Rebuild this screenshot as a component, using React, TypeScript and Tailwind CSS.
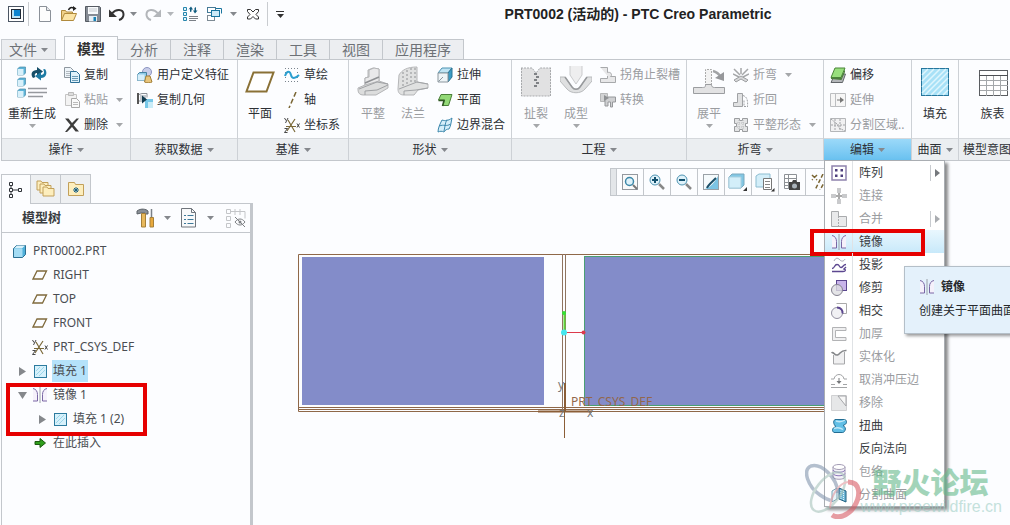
import { useState } from "react";
import type { ReactNode } from "react";
import clsx from "clsx";

type IconProps = { size?: number; children: ReactNode };

function Icon({ size = 16, children }: IconProps) {
  return (
    <svg
      width={size}
      height={size}
      viewBox={`0 0 ${size} ${size}`}
      fill="none"
      className="shrink-0"
      aria-hidden="true"
    >
      {children}
    </svg>
  );
}

function Caret({ className = "text-[#85888d]" }: { className?: string }) {
  return (
    <svg width="7" height="4" viewBox="0 0 7 4" className={clsx("shrink-0", className)} aria-hidden="true">
      <path d="M0 0h7L3.5 4z" fill="currentColor" />
    </svg>
  );
}

/* ---------- quick access icons ---------- */

const WindowIcon = (
  <Icon>
    <rect x=".5" y=".5" width="15" height="15" fill="#fff" stroke="#4b5563" />
    <rect x="3.5" y="3.5" width="9" height="9" fill="#b9e2f5" stroke="#1f2937" />
    <rect x="6" y="4" width="6" height="6" fill="#0b84d0" />
  </Icon>
);
const NewIcon = (
  <Icon>
    <path d="M2.5.5h7l4 4v11h-11z" fill="#fdfdfd" stroke="#8b9199" />
    <path d="M9.5.5v4h4" stroke="#8b9199" fill="#e5e7eb" />
  </Icon>
);
const OpenIcon = (
  <Icon>
    <path d="M.5 14.5v-10h4l1 1.5h6v2" fill="#f0d18a" stroke="#b08a3c" />
    <path d="M.5 14.5l3-7h12l-3 7z" fill="#fbe4a6" stroke="#b08a3c" />
    <path d="M7.500 4c1-2.500 3-3 5-2" stroke="#222" strokeWidth="1.500" />
    <path d="M12 0l3.500 2.500L12 5z" fill="#222" />
  </Icon>
);
const SaveIcon = (
  <Icon>
    <path d="M.5.5h14l1 1v14H.5z" fill="#858b94" stroke="#555b63" />
    <rect x="3" y="1" width="10" height="7" fill="#f8fafc" />
    <path d="M4 3h8M4 5h8" stroke="#c4c9cf" />
    <rect x="4" y="10" width="8" height="5.500" fill="#e6eef5" />
    <rect x="8.500" y="11" width="2.500" height="4" fill="#1681b5" />
  </Icon>
);
const UndoIcon = (
  <Icon>
    <path d="M3 7.500C7 2.500 14 3 14.500 8c.2 3-1.500 5-4.500 6" stroke="#333" strokeWidth="2" />
    <path d="M0 3.500V11h8z" fill="#333" />
  </Icon>
);
const RedoIcon = (
  <Icon>
    <path d="M13 7.500C9 2.500 2 3 1.500 8c-.2 3 1.500 5 4.500 6" stroke="#b3b6ba" strokeWidth="2" />
    <path d="M16 3.500V11H8z" fill="#b3b6ba" />
  </Icon>
);
const RegenSmallIcon = (
  <Icon>
    <path d="M1.500 1.500h3v3h-3zM1.500 6.500h3v3h-3zM1.500 11.500h3v3h-3z" fill="#e3f4fb" stroke="#2786ad" />
    <path d="M7 10.500h9M7 12.500h9M7 14.500h7" stroke="#7b8087" />
    <path d="M8 6V3l-1.500.5L9 .5l2 3H9.500v2zM14 1v3.500h1.500l-2.500 3-2-3h1.500V2z" fill="#115d80" />
  </Icon>
);
const WindowsIcon = (
  <Icon>
    <rect x="1.500" y="1.500" width="8" height="5" fill="#fff" stroke="#457a97" />
    <rect x="1.500" y="9.500" width="7" height="5" fill="#fff" stroke="#7d8a94" />
    <rect x="5.500" y="4.500" width="8" height="6" fill="#cdeaf7" stroke="#1a759f" />
    <path d="M10 2.500h5.500v5" stroke="#1a759f" />
  </Icon>
);
const CloseIcon = (
  <Icon>
    <path
      d="M2.500 3.500h3L8 6l2.500-2.500h3v2L11 8.500l2.500 2.500v2h-3L8 10.500 5.500 13h-3v-2L5 8.500 2.500 5.500z"
      fill="#fff"
      stroke="#333"
    />
  </Icon>
);

/* ---------- ribbon icons ---------- */

const RegenIcon = (
  <Icon size={32}>
    {[1, 12, 23].map((y) => (
      <g key={y}>
        <path d={`M1.500 ${y + 2}l2-2h6v6l-2 2h-6z`} fill="#5db4d8" stroke="#4a8aa8" strokeWidth=".7" />
        <path d={`M1.500 ${y + 2}h6v6h-6z`} fill="#d8f0fa" />
      </g>
    ))}
    <path d="M12 22.500h19M12 26.500h19M12 30.500h15" stroke="#96999e" strokeWidth="1.500" />
    <path d="M17 12c-3-4-1-8 4-8V1l6 4.500-6 4.500V7c-2 0-3 2-1.500 4z" fill="#164e68" />
    <path d="M29 3c3 4 1 9-4 9v2.500L19 10l6-4v3c3 0 4-3 2-5.500z" fill="#1d7ba4" />
  </Icon>
);
const CopyIcon = (
  <Icon>
    <path d="M.5.5h6l3 3v7h-9z" fill="#eef5fa" stroke="#8e979f" />
    <path d="M2 4.500h5M2 6.500h5M2 8.500h5" stroke="#b3bac0" />
    <path d="M6.500 4.500h6l3 3v8h-9z" fill="#dff1fa" stroke="#2c6f96" />
    <path d="M8 9.500h6M8 11.500h6M8 13.500h6" stroke="#6a9bb6" />
  </Icon>
);
const PasteIcon = (
  <Icon>
    <path d="M1.500 2.500h11v11h-11z" fill="#f3f3f3" stroke="#c4c4c4" />
    <path d="M4.500.5h5v3h-5z" fill="#ddd" stroke="#bbb" />
    <path d="M7.500 6.500h5l3 3v6h-8z" fill="#fafafa" stroke="#a8a8a8" />
    <path d="M9 10.500h5M9 12.500h5" stroke="#bbb" />
  </Icon>
);
const DeleteIcon = (
  <Icon>
    <path d="M1 1.500h3.500L8 6l4.500-4.500H15L9.500 8l5.500 6.500h-3.500L8 10l-5 5H1l5.500-7z" fill="#3d3d3d" />
  </Icon>
);
const UdfIcon = (
  <Icon>
    <circle cx="10" cy="5" r="4.500" fill="#c8cde9" stroke="#8c94c0" />
    <path d="M.5 7.500l2-2h7v6l-2 2h-7z" fill="#8fcbe8" stroke="#4583a2" />
    <path d="M.5 7.500h7v6h-7z" fill="#d6eefa" />
    <path d="M7.500 15l1.500-6h4l2 6c-1.500 1-6 1-7.500 0z" fill="#e8c57c" stroke="#a37f36" />
  </Icon>
);
const CopyGeomIcon = (
  <Icon>
    <path d="M1 1v11" stroke="#555" strokeWidth="2" />
    <path d="M2 2.500l3-1h5v4M2 9h3" stroke="#8b9097" />
    <path d="M3 3h6v6H3z" fill="#c3c8ce" />
    <path d="M8 7h8v9H8z" fill="#79c8e8" />
    <path d="M5 3.500l5 4-5 4z" fill="#123c50" />
    <path d="M11 10h5v6h-5z" fill="#c9ecf8" />
  </Icon>
);
const PlaneIcon = (
  <Icon size={32}>
    <path d="M9.500 6.500h20l-7 19h-20z" fill="#fff" stroke="#8a7136" strokeWidth="2" />
  </Icon>
);
const SketchIcon = (
  <Icon>
    <path
      d="M1 1.500h1M4 1.500h1M7 1.500h1M10 1.500h1M13 1.500h1M1 5.500h1M13 5.500h1M1 10.500h1M13 10.500h1M1 14.500h1M4 14.500h1M7 14.500h1M10 14.500h1M13 14.500h1"
      stroke="#7a848d"
    />
    <path d="M1 9c2-6 5-5 6-1s4 4 8 0" stroke="#2b9fd0" strokeWidth="2" />
  </Icon>
);
const AxisIcon = (
  <Icon>
    <path d="M12 0L5 16" stroke="#7a6634" strokeWidth="1.500" strokeDasharray="5 2.500" />
  </Icon>
);
const CsysIcon = (
  <Icon>
    <path d="M2 9.500h10M3 14L11 2M4 3l7 12" stroke="#7b6a3a" strokeWidth="1.200" />
    <path d="M.5 1l1.500 2.500M4 1L1.500 6M.5 11.500h3l-3 4h3M13 6.500l2.500 4M15.500 6.500l-2.500 4" stroke="#333" strokeWidth=".9" />
  </Icon>
);
const FlatWallIcon = (
  <Icon size={32}>
    <path d="M1 22l7-3v-7l3-1V4l5-2 6 1v12l9 3v4l-12 7H6c-3 0-5-2-5-5z" fill="#dcdddd" stroke="#b4b5b7" />
    <path d="M8 12l4-1V4l5-2 5 1v12L8 19z" fill="#e9e9ea" stroke="#b4b5b7" />
    <path d="M2 23l18-7 11 2M8 29v-4l12-1 11-5" stroke="#9fa1a4" />
    <path d="M8 17l14-6" stroke="#8f9194" strokeWidth="1.500" />
  </Icon>
);
const FlangeIcon = (
  <Icon size={32}>
    <path d="M2 9c3-5 8-8 18-8v15l11 2v4l-10 2-4 5H7c-4 0-6-2-6-6z" fill="#e0e1e1" stroke="#b5b6b8" />
    <path d="M6 6v16M10 4v16M14 2v16M18 2v14" stroke="#8f9194" strokeDasharray="2 2" />
    <path d="M2 23l18-7 11 2M7 29v-4l12-1 12-2" stroke="#a2a4a7" />
  </Icon>
);
const ExtrudeIcon = (
  <Icon>
    <path d="M1 6l4-5h10l-4 5z" fill="#bfe4f4" stroke="#4d92b1" />
    <path d="M11 6l4-5v9l-4 5z" fill="#3b9cc5" stroke="#2d7595" />
    <path d="M1 6h10v9H1z" fill="#eef4f7" stroke="#8b969d" />
    <path d="M1.500 14.500L6 10" stroke="#8b969d" />
  </Icon>
);
const FlatGreenIcon = (
  <Icon>
    <path d="M4 2.500h11l-3.500 11H6L7.500 8H1.500z" fill="#93d977" stroke="#4a7f38" />
    <path d="M5.500 14l1.500-5.500H1.500" stroke="#2f5722" strokeWidth="1.500" />
  </Icon>
);
const BoundaryIcon = (
  <Icon>
    <path d="M5 3c3 1 6 1 10-2-1 4-1 8-3 11-2 0-4 1-5 3-2-1-4-1-6 0 0-4 2-8 4-12z" fill="#d5eefa" stroke="#3d88ad" />
    <path d="M2.500 9c4-2 7 1 11-2M10 2.500C8 6 8 10 7 14" stroke="#3d88ad" />
  </Icon>
);
const RipIcon = (
  <Icon size={32}>
    <path d="M1 2h11l4 5 4-5h11v28H1z" fill="#e1e1e2" />
    <path d="M1 2h11l4 5 4-5h11M1.500 2v28h29V2" stroke="#a8aaad" strokeDasharray="2 1" />
    <path d="M14 8h3M16 11h3M14 14h3M16 17h3M14 20h3" stroke="#808286" strokeWidth="2" />
  </Icon>
);
const FormIcon = (
  <Icon size={32}>
    <path d="M10 0v9l6 9 6-9V0" fill="#eeeeef" stroke="#cacbcd" />
    <path d="M0 11h5l7 10c2 3 6 3 8 0l7-10h5v4l-7 8c-4 5-14 5-18 0l-7-8z" fill="#dfe0e1" stroke="#b9bbbd" />
    <path d="M5 11l7 10c2 3 6 3 8 0l7-10" stroke="#97999c" strokeWidth="1.500" />
  </Icon>
);
const ReliefIcon = (
  <Icon>
    <path d="M.5.500h7v5c4-1 5 3 3 4h5v6H.5v-4h7V9" fill="#e7e7e8" stroke="#a7a9ab" />
  </Icon>
);
const ConvertIcon = (
  <Icon>
    <path d="M.5 1.500h7v8h-7z" fill="#d2d3d4" stroke="#b7b8b9" />
    <path d="M5 14v-7l3-2h7.500v5h-3v5h-2v-5H8v4z" fill="#cfd0d2" stroke="#96989b" />
    <path d="M4 3l5 3-5 3z" fill="#8e9093" />
  </Icon>
);
const UnbendIcon = (
  <Icon size={32}>
    <path d="M12.500 20V3.500h6V20" fill="#f2f2f2" stroke="#aaa" strokeDasharray="2 1" />
    <path d="M.5 21.500h9c3 0 3-1 3-3h6c0 2 1 3 3 3h10v6H.5z" fill="#e2e2e3" stroke="#9b9da0" />
    <path d="M20 5c4 1 6 3 8 6" stroke="#a2a4a6" strokeWidth="2.500" />
    <path d="M31 6v9l-9-3z" fill="#96989b" />
  </Icon>
);
const BendIcon = (
  <Icon>
    <path d="M1 2l6 6M15 2L9 8M0 7l6 3M16 7l-6 3M8 1v6" stroke="#a5a7a9" strokeWidth="1.500" />
    <path d="M1 13l7-4 7 4-2 2-5-3-5 3z" fill="#d7d8d9" stroke="#9d9fa2" />
  </Icon>
);
const BendBackIcon = (
  <Icon>
    <path d="M.5 10.500h4v-9h5v13h-9z" fill="#e0e1e2" stroke="#a0a2a5" />
    <path d="M10 3.500c4 1 5 5 4.500 11M11 8.500v6h4" stroke="#a0a2a5" strokeDasharray="2 1" />
  </Icon>
);
const FlatPatternIcon = (
  <Icon>
    <path d="M1.500 1.500h5v2h3v-2h5v5h-2v3h2v5h-5v-2h-3v2h-5v-5h2v-3h-2z" fill="#e3e4e5" stroke="#9a9c9f" />
    <path d="M4 6h8M4 10h8M6 3v10M10 3v10" stroke="#b9bbbd" strokeDasharray="1 1" />
  </Icon>
);
const OffsetIcon = (
  <Icon>
    <path d="M5 7h10.500l-3 8.500H1z" fill="#b4b7ba" stroke="#62666a" />
    <path d="M1 10l10 1 4-9v3l-3.500 8L1 12z" fill="#4c7d3d" />
    <path d="M5 1h10l-4 9.500H1z" fill="#98df7d" stroke="#4a8539" />
  </Icon>
);
const ExtendIcon = (
  <Icon>
    <path d="M.5 1.500h15v13H.5zM5.500 1.500v13" fill="#f6f6f6" stroke="#bcbec1" />
    <path d="M7 8h4" stroke="#777" />
    <path d="M10 5l4 3-4 3z" fill="#777" />
  </Icon>
);
const SplitAreaIcon = (
  <Icon>
    <path d="M.5 1.500h15v13H.5z" fill="#f1f1f2" stroke="#b4b6b9" />
    <path d="M1 2l6 5 2 4 6 3M1 8h14M5 2v12M10 2v12" stroke="#a0a2a5" strokeDasharray="2 1" />
  </Icon>
);
const FillIcon = (
  <Icon size={32}>
    <rect x="2.500" y="2.500" width="27" height="27" fill="#a8e1f7" stroke="#25769d" />
    <path
      d="M3 9l6-6M3 15L15 3M3 21L21 3M3 27L27 3M6 29L29 6M12 29l17-17M18 29l11-11M24 29l5-5"
      stroke="#dff5fd"
      strokeWidth="1.500"
    />
  </Icon>
);
const TableIcon = (
  <Icon size={32}>
    <rect x="2.500" y="4.500" width="28" height="25" fill="#fff" stroke="#5a5d61" />
    <path d="M3 14.500h28M3 19.500h28M3 24.500h28M9.500 10v20M16.500 10v20M23.500 10v20" stroke="#a4a7aa" />
    <path d="M2 9.500h29" stroke="#4c4f53" />
  </Icon>
);

/* ---------- tree icons ---------- */

const PartIcon = (
  <Icon>
    <path d="M1.500 5.500l3-3h9v9l-3 3h-9z" fill="#4fb0da" stroke="#2b6f92" />
    <path d="M2 5.500l3-3h8l-3 3z" fill="#d8f1fb" />
    <path d="M2 6h8.500v8H2z" fill="#a4dcf4" />
  </Icon>
);
const DatumIcon = (
  <Icon>
    <path d="M5 4h9.500L10.500 12H1z" stroke="#7f6a3c" strokeWidth="1.300" />
  </Icon>
);
const FillSmallIcon = (
  <Icon>
    <rect x="2.500" y="2.500" width="12" height="12" fill="#d6f1fb" stroke="#2c7b9f" />
    <path d="M4 12l8-8M7 13l6-6M4 8l4-4" stroke="#9bd5ea" />
  </Icon>
);
const MirrorIcon = (
  <Icon>
    <path d="M8 0v16" stroke="#9aa0a8" />
    <path d="M1 1.500c3 .5 4.500 3 4.500 6v6.500H1M15 1.500c-3 .5-4.500 3-4.500 6v6.500H15" fill="#f5f1fb" stroke="#7a67a5" />
  </Icon>
);
const InsertIcon = (
  <Icon>
    <path d="M3 6.500h5v-3l5.500 4.500L8 12.500v-3H3z" fill="#2f9e1c" stroke="#1c5a10" />
  </Icon>
);
const TreeIcon = (
  <Icon>
    <path d="M1.500.5h3v3h-3zM1.500 6.500h3v3h-3zM1.500 12.500h3v3h-3zM10.500 6.500h3v3h-3zM3 4v2M3 10v2M5 8h5" stroke="#2f3338" />
  </Icon>
);
const FoldersIcon = (
  <Icon size={20}>
    {[0, 3, 6].map((d) => (
      <path
        key={d}
        d={`M${1 + d} ${2 + d}h4l1 1.500h6v7.500H${1 + d}z`}
        fill="#fdeebd"
        stroke="#c2a05a"
      />
    ))}
  </Icon>
);
const FavoriteIcon = (
  <Icon size={20}>
    <path d="M2.500 3.500h6l1 2h8v11h-15z" fill="#fdeebd" stroke="#c2a05a" />
    <path d="M10 8v6M7 11h6M8 9l4 4M12 9l-4 4" stroke="#155f86" />
  </Icon>
);
const ToolsIcon = (
  <Icon size={20}>
    <path d="M1 3c4-3 9-2 11 0v3H9V5H5c-1 0-3 1-4 1z" fill="#8a9097" stroke="#5d6369" />
    <path d="M5.500 5.500h4V19h-4z" fill="#e8b95d" stroke="#a5803a" />
    <path d="M15.500 1v8" stroke="#7a8087" strokeWidth="1.500" />
    <path d="M14 9.500h3.500V19H14z" fill="#e8a93c" stroke="#a5803a" />
  </Icon>
);
const SettingsIcon = (
  <Icon size={20}>
    <path d="M2.500.5h10l4 4v14.500h-14z" fill="#f8f9fa" stroke="#6f757c" />
    <path d="M12.500.5v4h4" stroke="#6f757c" />
    <path d="M8.500 7.500h6M8.500 11.500h6M8.500 15.500h6M5 7.500h2M5 11.500h2M5 15.500h2" stroke="#3e7999" />
  </Icon>
);
const HiddenIcon = (
  <Icon size={20}>
    <path d="M.5 1.500h4v4h-4zM.5 8.500h4v4h-4zM.5 15.500h4v4h-4zM5 3.500h14v7M9 1v6M14 1v6" stroke="#c4c6c9" />
    <path d="M9 14c3-4 7-4 10 0-3 4-7 4-10 0zM9 9l10 10" stroke="#7d8084" />
    <circle cx="14" cy="14" r="1.500" fill="#7d8084" />
  </Icon>
);

/* ---------- view toolbar icons ---------- */

const RefitIcon = (
  <Icon>
    <rect x=".5" y=".5" width="15" height="15" fill="#fafafa" stroke="#94999f" />
    <path d="M11 11l4 4" stroke="#777" strokeWidth="2" />
    <circle cx="7.500" cy="7.500" r="4" fill="#dff2fa" stroke="#3c87a8" strokeWidth="1.500" />
  </Icon>
);
const ZoomInIcon = (
  <Icon>
    <path d="M10 10l5 5" stroke="#888" strokeWidth="2.500" />
    <circle cx="6" cy="6" r="5" fill="#dff2fa" stroke="#4d93b2" />
    <path d="M6 3v6M3 6h6" stroke="#12506e" strokeWidth="2" />
  </Icon>
);
const ZoomOutIcon = (
  <Icon>
    <path d="M10 10l5 5" stroke="#888" strokeWidth="2.500" />
    <circle cx="6" cy="6" r="5" fill="#dff2fa" stroke="#4d93b2" />
    <path d="M3 6h6" stroke="#12506e" strokeWidth="2" />
  </Icon>
);
const RepaintIcon = (
  <Icon>
    <rect x=".5" y=".5" width="15" height="15" fill="#f5fafc" stroke="#9aa1a7" />
    <path d="M15 2v13H2c6-2 10-7 13-13z" fill="#7cc4e4" />
    <path d="M4 14c1-3 5-6 9-10" stroke="#1d4f68" strokeWidth="2" />
  </Icon>
);
const ShadeIcon = (
  <Icon size={20}>
    <path d="M1 5l3-3h12v11l-3 3H1z" fill="#82c7e4" stroke="#7aa9be" />
    <path d="M1 5h12v11H1z" fill="#d3eef9" stroke="#a9cfdf" />
    <path d="M19 15v4h-4z" fill="#333" />
  </Icon>
);
const SavedViewsIcon = (
  <Icon size={20}>
    <path d="M1 4l3-2h11v10l-3 3H1z" fill="#d3eef9" stroke="#8dbdd1" />
    <path d="M8.500 6.500h8v11h-8z" fill="#fff" stroke="#777" />
    <path d="M10 9.500h5M10 12.500h5M10 15.500h5" stroke="#888" />
    <path d="M19.500 16v3.500H16z" fill="#333" />
  </Icon>
);
const CameraIcon = (
  <Icon>
    <path d="M.5.5h12v14H.5zM1 4.500h12M1 8.500h7M1 11.500h5M4.500 1v13" fill="#fff" stroke="#8d9196" />
    <path d="M5 8h3l1-2h3l1 2h3v8H5z" fill="#444" />
    <circle cx="10.500" cy="12" r="2.500" fill="#aab3ba" />
  </Icon>
);
const DatumDisplayIcon = (
  <Icon>
    <path d="M1 1l5 5M6 1L1 6M12 0L4 16M15 5l-6 11" stroke="#7a6634" strokeWidth="1.500" strokeDasharray="4 2" />
  </Icon>
);

/* ---------- edit menu icons ---------- */

const PatternIcon = (
  <Icon>
    <rect x="1" y="1" width="14" height="14" fill="#fff" stroke="#8e82ad" strokeWidth="1.500" />
    <path d="M4 4h2.500v2.500H4zM9.500 4H12v2.500H9.500zM4 9.500h2.500V12H4zM9.500 9.500H12V12H9.500z" fill="#4e3f7d" />
  </Icon>
);
const JoinIcon = (
  <Icon>
    <path d="M6 0h4v5H6zM0 6h5v4H0zM11 6h5v4h-5zM6 11h4v5H6z" fill="#c9cacc" />
    <path d="M5 8h6M8 5v6" stroke="#aaa" strokeWidth="2" />
  </Icon>
);
const MergeIcon = (
  <Icon>
    <path d="M.5.5h7v5h8v10H.5z" fill="#e9eaeb" stroke="#a9abad" />
    <path d="M7.500 5v10" stroke="#a9abad" strokeDasharray="2 1" />
  </Icon>
);
const ProjectIcon = (
  <Icon>
    <path d="M3 4c2-4 4-3 6-1s4 1 5-1" stroke="#a6a3b2" />
    <path d="M1 14.500h11c3 0 3-2 1-2.500l2-2M1 11.500c3 0 2-4 5-4s2 3 4 3 2-3 5-3" stroke="#5c4790" strokeWidth="1.300" />
  </Icon>
);
const TrimIcon = (
  <Icon>
    <rect x="5.500" y=".5" width="10" height="10" fill="#c8b4ea" stroke="#5c4790" />
    <circle cx="6" cy="10" r="5.500" fill="#dddde1" fillOpacity=".8" stroke="#83808f" />
  </Icon>
);
const IntersectIcon = (
  <Icon>
    <path d="M5.500.5h10v10h-5" stroke="#aaa" />
    <circle cx="6" cy="10" r="5.500" fill="#f1f1f4" stroke="#9391a0" />
    <path d="M6 4.500c4 0 6 3 5.500 6" stroke="#5c4790" strokeWidth="2" />
  </Icon>
);
const ThickenIcon = (
  <Icon>
    <path d="M15 1.500H1.500v13H15v-3H4.500v-7H15z" fill="#efeff0" stroke="#b2b3b5" />
  </Icon>
);
const SolidifyIcon = (
  <Icon>
    <path d="M2.500 6v9h11V3" fill="#f0f0f1" stroke="#a6a7a9" />
    <path d="M.5 4c2-2 3 3 6 2s3-5 9-4.500" stroke="#85878a" strokeWidth="1.500" />
  </Icon>
);
const CancelBeadIcon = (
  <Icon>
    <path d="M0 7h3c1-6 9-6 10 0h3M0 15.500h16M0 12.500h4M12 12.500h4" stroke="#a2a4a6" />
    <path d="M8 6v4" stroke="#76787b" />
    <path d="M5.500 9h5L8 12z" fill="#76787b" />
  </Icon>
);
const RemoveIcon = (
  <Icon>
    <path d="M.5.5h15v15H.5z" fill="#e6e7e8" stroke="#d0d1d3" />
    <path d="M7 1h8v10z" fill="#f7f7f7" stroke="#a5a6a9" />
  </Icon>
);
const WarpIcon = (
  <Icon>
    <path d="M4 1.500h10c2 1 2 4 0 5l-2 1c2 1 3 3 2 5s-2 2-3 2H3c-2-1-2-4 0-5l2-1C3 7.500 1.500 3 4 1.500z" fill="#62bfe6" stroke="#236d93" />
    <path d="M5 3c3 1 6 1 9-1M3 10.500c3-1 6-1 9 1" stroke="#c2e8f7" strokeWidth="1.500" />
  </Icon>
);
const WrapIcon = (
  <Icon>
    <path d="M2 3v10c0 3 12 3 12 0V3" fill="#f4f2f8" stroke="#a39cb5" />
    <ellipse cx="8" cy="3" rx="6" ry="2.500" fill="#fff" stroke="#a39cb5" />
    <path d="M2 6c1 3 11 3 12 0M2 9.500c1 3 11 3 12 0" stroke="#8b77b8" />
  </Icon>
);
const SplitSurfIcon = (
  <Icon>
    <path d="M1 4l5-3v11l-5 3z" fill="#e8f4f9" stroke="#77a2b5" />
    <path d="M8 1l7 3v11l-7-3z" fill="#6fb7d6" stroke="#1f5f80" />
    <path d="M10 3v10M12.500 4v10" stroke="#e8f4f9" strokeDasharray="1 1" />
  </Icon>
);

type SmallButtonProps = { icon: ReactNode; label: string; disabled?: boolean; caret?: boolean };

function SmallButton({ icon, label, disabled, caret }: SmallButtonProps) {
  return (
    <button
      type="button"
      disabled={disabled}
      className={clsx(
        "flex h-[25px] items-center gap-1 whitespace-nowrap px-0.5",
        disabled ? "text-[#9a9c9f]" : "text-[#2d3035]"
      )}
    >
      {icon}
      {label}
      {caret && <Caret className="ml-1 text-[#a5a7aa]" />}
    </button>
  );
}

type BigButtonProps = SmallButtonProps & { wide?: boolean };

function BigButton({ icon, label, disabled, caret, wide }: BigButtonProps) {
  return (
    <button
      type="button"
      disabled={disabled}
      className={clsx(
        "flex shrink-0 flex-col items-center whitespace-nowrap pt-1",
        wide ? "w-14" : "w-10",
        disabled ? "text-[#9a9c9f]" : "text-[#2d3035]"
      )}
    >
      {icon}
      <span className="mt-2 leading-4">{label}</span>
      {caret && <Caret className="mt-0.5 text-[#a5a7aa]" />}
    </button>
  );
}

type GroupProps = {
  label: string;
  className: string;
  bodyClass?: string;
  active?: boolean;
  onToggle?: () => void;
  menu?: ReactNode;
  children: ReactNode;
};

function Group({ label, className, bodyClass = "pl-1", active, onToggle, menu, children }: GroupProps) {
  return (
    <section className={clsx("relative shrink-0 border-r border-[#cdd1d6]", className)}>
      <div className={clsx("flex h-[78px] items-start pt-0.5", bodyClass)}>{children}</div>
      <button
        type="button"
        onClick={onToggle}
        className={clsx(
          "flex h-[22px] w-full items-center justify-center gap-1 whitespace-nowrap border-t border-[#d5d8dc] text-[#2d3035]",
          active ? "bg-linear-to-b from-[#9bd9f9] to-[#69c1f0]" : "bg-[#ebeef1]"
        )}
      >
        {label}
        <Caret />
      </button>
      {menu}
    </section>
  );
}

const tabs = ["模型", "分析", "注释", "渲染", "工具", "视图", "应用程序"];

const menuItems = [
  { label: "阵列", icon: PatternIcon, sub: true },
  { label: "连接", icon: JoinIcon, disabled: true },
  { label: "合并", icon: MergeIcon, disabled: true, sub: true },
  { label: "镜像", icon: MirrorIcon, current: true },
  { label: "投影", icon: ProjectIcon },
  { label: "修剪", icon: TrimIcon },
  { label: "相交", icon: IntersectIcon },
  { label: "加厚", icon: ThickenIcon, disabled: true },
  { label: "实体化", icon: SolidifyIcon, disabled: true },
  { label: "取消冲压边", icon: CancelBeadIcon, disabled: true },
  { label: "移除", icon: RemoveIcon, disabled: true },
  { label: "扭曲", icon: WarpIcon },
  { label: "反向法向", icon: null },
  { label: "包络", icon: WrapIcon, disabled: true },
  { label: "分割曲面", icon: SplitSurfIcon, disabled: true },
];

function EditMenu() {
  return (
    <ul className="absolute top-full left-0 z-20 w-[121px] border border-[#a9adb2] bg-white shadow-[3px_3px_3px_rgba(0,0,0,0.45)]">
      {menuItems.map((item) => (
        <li key={item.label} className="relative">
          <button
            type="button"
            disabled={item.disabled}
            className={clsx(
              "flex h-[23px] w-full items-center text-left",
              item.disabled ? "text-[#9a9c9f]" : "text-[#3a3d42]",
              item.current && "bg-linear-to-b from-[#e9f7fe] to-[#c8e9fa]"
            )}
          >
            <span className="flex h-full w-7 shrink-0 items-center justify-center border-r border-[#dfe2e5]">
              {item.icon}
            </span>
            <span className="flex-1 whitespace-nowrap pl-1.5">{item.label}</span>
            {item.sub && (
              <span className="mr-1 flex h-4 items-center border-l border-[#c8cbcf] pl-1">
                <svg width="5" height="8" viewBox="0 0 5 8" aria-hidden="true">
                  <path d="M0 0l5 4-5 4z" fill={item.disabled ? "#a9acb0" : "#75787c"} />
                </svg>
              </span>
            )}
          </button>
          {item.current && (
            <>
              <span className="pointer-events-none absolute -top-px -left-[15px] h-[27px] w-[115px] border-4 border-[#e60000]" />
              <div
                role="tooltip"
                className="absolute top-9 left-[79px] z-30 h-[68px] w-40 border border-[#b4bfc8] bg-[#e4f1fb] pt-2 pl-3.5 text-[#26292d] shadow-[2px_2px_3px_rgba(0,0,0,0.4)]"
              >
                <p className="flex h-6 items-center gap-1.5 font-bold">
                  {MirrorIcon}
                  镜像
                </p>
                <p className="flex h-6 items-center whitespace-nowrap">创建关于平面曲面</p>
              </div>
            </>
          )}
        </li>
      ))}
    </ul>
  );
}

function Ribbon() {
  const [menuOpen, setMenuOpen] = useState(true);

  return (
    <div className="ml-px flex border-b border-l border-[#c3c7cc]">
      <Group label="操作" className="w-[129px]" bodyClass="pl-0.5">
        <BigButton icon={RegenIcon} label="重新生成" caret wide />
        <div className="ml-0.5">
          <SmallButton icon={CopyIcon} label="复制" />
          <SmallButton icon={PasteIcon} label="粘贴" disabled caret />
          <SmallButton icon={DeleteIcon} label="删除" caret />
        </div>
      </Group>
      <Group label="获取数据" className="w-[107px]" bodyClass="pl-1">
        <div>
          <SmallButton icon={UdfIcon} label="用户定义特征" />
          <SmallButton icon={CopyGeomIcon} label="复制几何" />
        </div>
      </Group>
      <Group label="基准" className="w-[111px]" bodyClass="pl-0.5">
        <BigButton icon={PlaneIcon} label="平面" />
        <div className="ml-0.5">
          <SmallButton icon={SketchIcon} label="草绘" />
          <SmallButton icon={AxisIcon} label="轴" />
          <SmallButton icon={CsysIcon} label="坐标系" />
        </div>
      </Group>
      <Group label="形状" className="w-[163px]">
        <BigButton icon={FlatWallIcon} label="平整" disabled />
        <BigButton icon={FlangeIcon} label="法兰" disabled />
        <div className="ml-0.5">
          <SmallButton icon={ExtrudeIcon} label="拉伸" />
          <SmallButton icon={FlatGreenIcon} label="平面" />
          <SmallButton icon={BoundaryIcon} label="边界混合" />
        </div>
      </Group>
      <Group label="工程" className="w-[175px]">
        <BigButton icon={RipIcon} label="扯裂" disabled caret />
        <BigButton icon={FormIcon} label="成型" disabled caret />
        <div className="ml-0.5">
          <SmallButton icon={ReliefIcon} label="拐角止裂槽" disabled />
          <SmallButton icon={ConvertIcon} label="转换" disabled />
        </div>
      </Group>
      <Group label="折弯" className="w-[137px]" bodyClass="pl-0.5">
        <BigButton icon={UnbendIcon} label="展平" disabled caret />
        <div className="ml-0.5">
          <SmallButton icon={BendIcon} label="折弯" disabled caret />
          <SmallButton icon={BendBackIcon} label="折回" disabled />
          <SmallButton icon={FlatPatternIcon} label="平整形态" disabled caret />
        </div>
      </Group>
      <Group
        label="编辑"
        className="w-[88px]"
        bodyClass="pl-1"
        active={menuOpen}
        onToggle={() => setMenuOpen(!menuOpen)}
        menu={menuOpen && <EditMenu />}
      >
        <div>
          <SmallButton icon={OffsetIcon} label="偏移" />
          <SmallButton icon={ExtendIcon} label="延伸" disabled />
          <SmallButton icon={SplitAreaIcon} label="分割区域.." disabled />
        </div>
      </Group>
      <Group label="曲面" className="w-[47px]" bodyClass="justify-center">
        <BigButton icon={FillIcon} label="填充" />
      </Group>
      <Group label="模型意图" className="w-[68px]" bodyClass="justify-center">
        <BigButton icon={TableIcon} label="族表" />
      </Group>
    </div>
  );
}

const qatButton = "flex h-7 w-6 items-center justify-center";

function TitleBar() {
  return (
    <header className="flex h-9 items-start">
      <div className="flex w-[290px] shrink-0 items-center pl-1">
        <button type="button" aria-label="Window" className={qatButton}>{WindowIcon}</button>
        <span className="mr-1 h-6 w-px bg-[#c9ccd0]" />
        <button type="button" aria-label="New" className={qatButton}>{NewIcon}</button>
        <button type="button" aria-label="Open" className={qatButton}>{OpenIcon}</button>
        <button type="button" aria-label="Save" className={qatButton}>{SaveIcon}</button>
        <button type="button" aria-label="Undo" className={qatButton}>{UndoIcon}</button>
        <button type="button" aria-label="Undo list" className="px-0.5"><Caret /></button>
        <button type="button" aria-label="Redo" className={clsx(qatButton, "ml-0.5")}>{RedoIcon}</button>
        <button type="button" aria-label="Redo list" className="px-0.5"><Caret className="text-[#b3b6ba]" /></button>
        <button type="button" aria-label="Regenerate" className={clsx(qatButton, "ml-0.5")}>{RegenSmallIcon}</button>
        <button type="button" aria-label="Windows" className={qatButton}>{WindowsIcon}</button>
        <button type="button" aria-label="Window list" className="px-1"><Caret /></button>
        <button type="button" aria-label="Close" className={qatButton}>{CloseIcon}</button>
        <span className="mx-0.5 h-6 w-px bg-[#c9ccd0]" />
        <button type="button" aria-label="Customize" className="flex flex-col items-center gap-0.5 px-1.5">
          <span className="h-px w-2 bg-[#333]" />
          <Caret className="text-[#333]" />
        </button>
      </div>
      <h1 className="flex-1 truncate pr-6 text-center font-['Liberation_Sans','Noto_Sans_CJK_SC',sans-serif] text-[14px] leading-7 font-bold text-[#222]">
        PRT0002 (活动的) - PTC Creo Parametric
      </h1>
    </header>
  );
}

function TabBar() {
  const [tab, setTab] = useState("模型");

  return (
    <nav className="relative flex h-6 items-end border-b border-[#c3c7cc] pl-px text-[14px] leading-5 text-[#6d7176]">
      <button
        type="button"
        className="mr-2 flex h-5 w-[55px] items-center justify-center gap-1 border border-b-0 border-[#c9cdd2] bg-[#eceef1]"
      >
        文件
        <Caret />
      </button>
      {tabs.map((name) => (
        <button
          key={name}
          type="button"
          onClick={() => setTab(name)}
          className={clsx(
            "shrink-0 border-[#c3c7cc] px-3",
            name === tab
              ? "-mb-px h-6 border border-b-0 bg-[#fcfdff] font-bold text-[#333]"
              : "h-5 border-t border-r bg-[#eceef1]"
          )}
        >
          {name}
        </button>
      ))}
    </nav>
  );
}

type TreeRow = { label: string; icon: ReactNode; level: number; open?: boolean; selected?: boolean };

const treeRows: TreeRow[] = [
  { label: "PRT0002.PRT", icon: PartIcon, level: 0 },
  { label: "RIGHT", icon: DatumIcon, level: 1 },
  { label: "TOP", icon: DatumIcon, level: 1 },
  { label: "FRONT", icon: DatumIcon, level: 1 },
  { label: "PRT_CSYS_DEF", icon: CsysIcon, level: 1 },
  { label: "填充 1", icon: FillSmallIcon, level: 1, open: false, selected: true },
  { label: "镜像 1", icon: MirrorIcon, level: 1, open: true },
  { label: "填充 1 (2)", icon: FillSmallIcon, level: 2, open: false },
  { label: "在此插入", icon: InsertIcon, level: 1 },
];

const levelPadding = ["pl-2.5", "pl-3", "pl-8"];

function ModelTree() {
  return (
    <aside className="flex w-[253px] shrink-0 flex-col pt-[13px] pl-px">
      <div className="relative z-10 -mb-px flex h-[30px]">
        <button type="button" aria-label="Tree" className="flex w-[30px] items-center justify-center border border-b-0 border-[#c3c7cc] bg-[#fcfdff]">
          {TreeIcon}
        </button>
        <button type="button" aria-label="Folders" className="flex w-[30px] items-center justify-center border border-l-0 border-[#c3c7cc] bg-[#eef0f2]">
          {FoldersIcon}
        </button>
        <button type="button" aria-label="Favorites" className="flex w-[30px] items-center justify-center border border-l-0 border-[#c3c7cc] bg-[#eef0f2]">
          {FavoriteIcon}
        </button>
      </div>
      <div className="flex-1 border-t border-r-3 border-l border-[#c3c7cc]">
        <div className="flex h-[29px] items-center border-b border-[#c3c7cc] pl-5">
          <h2 className="flex-1 text-[13px] font-bold text-[#3a3d42]">模型树</h2>
          <button type="button" aria-label="Tools" className="flex items-center gap-2">
            {ToolsIcon}
            <Caret />
          </button>
          <button type="button" aria-label="Show" className="ml-2 flex items-center gap-2">
            {SettingsIcon}
            <Caret />
          </button>
          <button type="button" aria-label="Hide" className="mr-1 ml-3">{HiddenIcon}</button>
        </div>
        <div className="relative pt-1.5">
          <ul className="text-[#4a4d52]">
            {treeRows.map((row, i) => (
              <li key={i} className={clsx("flex h-6 items-center", levelPadding[row.level])}>
                {row.level > 0 && (
                  <span className="mr-0.5 flex w-4 justify-center">
                    {row.open !== undefined && (
                      <svg width="9" height="9" viewBox="0 0 9 9" aria-hidden="true">
                        <path d={row.open ? "M0 1h9L4.500 8z" : "M1 0l7 4.500L1 9z"} fill="#85888c" />
                      </svg>
                    )}
                  </span>
                )}
                {row.icon}
                <span className={clsx("ml-1 px-px leading-[22px]", row.selected && "bg-[#b5e2fa]")}>
                  {row.label}
                </span>
              </li>
            ))}
          </ul>
          <span className="pointer-events-none absolute top-[150px] left-1 h-[53px] w-[141px] border-4 border-[#e60000]" />
        </div>
      </div>
    </aside>
  );
}

const viewButtons = [
  { label: "Refit", icon: RefitIcon },
  { label: "Zoom in", icon: ZoomInIcon },
  { label: "Zoom out", icon: ZoomOutIcon },
  { label: "Repaint", icon: RepaintIcon },
  { label: "Display style", icon: ShadeIcon },
  { label: "Saved orientations", icon: SavedViewsIcon },
  { label: "View manager", icon: CameraIcon },
  { label: "Datum display", icon: DatumDisplayIcon },
];

function Viewport() {
  return (
    <main className="min-w-0 flex-1 overflow-hidden pt-[7px]">
      <div className="ml-[357px] flex h-7 w-fit border border-[#c3c7cc]">
        <span className="w-[5px] bg-[#e3e6e9]" />
        {viewButtons.map((b) => (
          <button
            key={b.label}
            type="button"
            aria-label={b.label}
            className="flex w-[27px] items-center justify-center border-l border-[#c3c7cc]"
          >
            {b.icon}
          </button>
        ))}
      </div>
      <svg viewBox="298 250 560 190" className="mt-[54px] ml-[45px] h-[190px] w-[560px]" fill="none">
        <path d="M870 254.500H298.500v153h572M298.500 406v5.500H870M298 409.500h572" stroke="#8f6849" />
        <rect x="302" y="257" width="242" height="148" fill="#838cc9" />
        <rect x="584.500" y="256.500" width="290" height="149" fill="#838cc9" stroke="#4a9f74" />
        <path d="M562.500 254v158M565.500 254v158" stroke="#8f7460" />
        <path d="M564.500 384v54" stroke="#8b5e37" />
        <path d="M565 383v29M538 411.500h54" stroke="#8b5e37" strokeWidth="2" />
        <path d="M564.500 313v18" stroke="#5fd43a" strokeWidth="2" />
        <circle cx="564" cy="313" r="2" fill="#33e233" />
        <path d="M566 332.500h18" stroke="#dc3a4c" />
        <circle cx="583.500" cy="332.500" r="2" fill="#dc3a4c" />
        <circle cx="564" cy="332.500" r="3" fill="#45e6ee" />
        <g fontSize="12" fontFamily="'Noto Sans', sans-serif">
          <text x="571" y="406" fill="#93674b">PRT_CSYS_DEF</text>
          <text x="558" y="389" fill="#777">y</text>
          <text x="559" y="417" fill="#777">z</text>
          <text x="587" y="417" fill="#777">x</text>
        </g>
      </svg>
    </main>
  );
}

function Watermark() {
  return (
    <div className="pointer-events-none absolute right-2 bottom-1.5 z-40 flex items-center opacity-60">
      <svg width="58" height="56" viewBox="0 0 58 56" fill="none" aria-hidden="true">
        <path d="M33 30C32 14 16 0 6 3-3 7 3 24 15 32c4 3 8 5 12 6" stroke="#8496ae" strokeWidth="3.500" />
        <ellipse cx="23" cy="29" rx="12" ry="23" transform="rotate(38 23 29)" stroke="#a8c4bb" strokeWidth="2.500" />
        <path d="M43 19c13 0 13 14 6 25-6 9-16 12-22 8" stroke="#d95c66" strokeWidth="5" />
        <path d="M43 19c-9 1-17 13-18 26" stroke="#e39aa0" strokeWidth="2" />
      </svg>
      <div className="-ml-0.5">
        <p className="pl-3 font-['Noto_Sans_CJK_SC',sans-serif] text-[29px] leading-8 font-black text-[#65b98b]">
          野火论坛
        </p>
        <p className="font-['Liberation_Sans',sans-serif] text-[16px] leading-5 text-[#9fcfc6]">
          www.proewildfire.cn
        </p>
      </div>
    </div>
  );
}

export default function App() {
  return (
    <div className="relative flex min-h-screen flex-col overflow-hidden bg-[#fcfdff] font-['Noto_Sans','Noto_Sans_CJK_SC',sans-serif] text-xs">
      <TitleBar />
      <TabBar />
      <Ribbon />
      <div className="flex flex-1">
        <ModelTree />
        <Viewport />
      </div>
      <Watermark />
    </div>
  );
}
